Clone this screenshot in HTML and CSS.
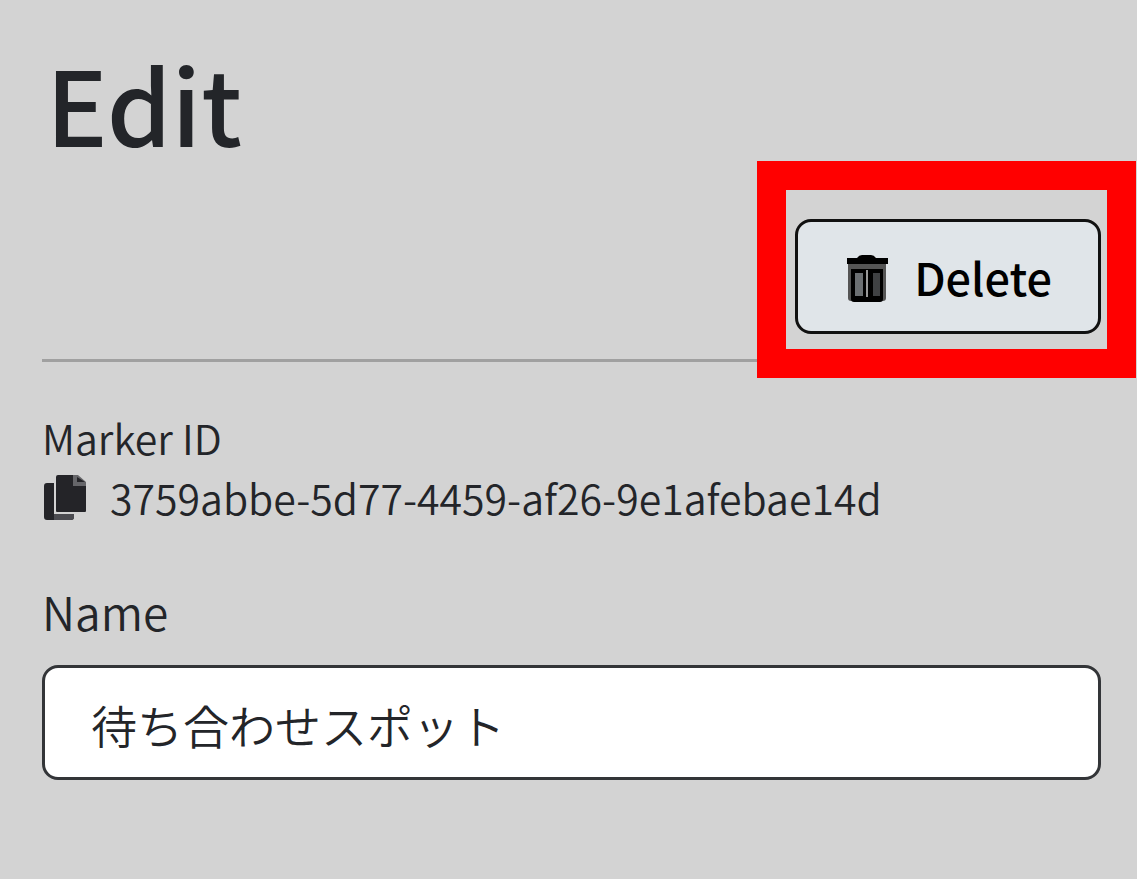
FILE: index.html
```html
<!DOCTYPE html>
<html lang="ja">
<head>
  <meta charset="UTF-8">
  <title>Edit</title>
  <meta name="viewport" content="width=device-width,initial-scale=1">
  <link rel="stylesheet" href="styles.css">
</head>
<body>
  <main class="panel">
    <h1>Edit</h1>
    <div class="toolbar">
      <div class="highlight">
        <button type="button" class="delete-btn">
          <svg class="icon-trash" viewBox="0 0 42 52" aria-hidden="true">
            <path fill="#555" d="M2 13h38v34q0 3-3 3H5q-3 0-3-3z"/>
            <path d="M1 7h10q2-3 5-3h9q3 0 5 3h12v6H1z"/>
            <path d="M5 18h32v30q0 3-3 3H8q-3 0-3-3z"/>
            <path fill="#6b6f72" d="M9 22h8v23H9z"/>
            <path fill="#999" d="M20 19h2v27h-2z"/>
            <path fill="#3f4143" d="M27 22h7v23h-7z"/>
          </svg>
          Delete
        </button>
      </div>
    </div>
    <form class="marker-form">
      <div class="marker-id">
        <div>Marker ID</div>
        <div class="id-row">
          <svg class="icon-copy" viewBox="0 0 42 48" aria-hidden="true">
            <path d="M3 10h7v31h20v3q0 3-3 3H3q-3 0-3-3V13q0-3 3-3z"/>
            <path fill="#4b4b50" d="M10 41h20v3q0 3-3 3H10z"/>
            <path d="M14 2h15v11h13v25q0 1-1 1H13q-1 0-1-1V4q0-2 2-2z"/>
            <path fill="#66666a" d="M29 2h5l8 7v4H29z"/>
            <path d="M33 4l8 5h-8z"/>
          </svg>
          <span>3759abbe-5d77-4459-af26-9e1afebae14d</span>
        </div>
      </div>
      <label for="name">Name</label>
      <input type="text" id="name" value="待ち合わせスポット">
    </form>
  </main>
</body>
</html>
```
FILE: styles.css
```css
*{box-sizing:border-box}
body{margin:0;background:#d3d3d3;color:#232529;
  font-family:"Noto Sans CJK JP",sans-serif}
.panel{padding:43px 36px 40px 42px}
h1{margin:0 0 0 4px;font-size:103px;line-height:120px;font-weight:500}

/* панель действий */
.toolbar{display:flex;justify-content:flex-end;height:199px;border-bottom:3px solid #a0a0a0}
.highlight{position:relative;display:flex;margin-top:56px;height:115px}
.highlight::before{content:"";position:absolute;inset:-58px -35px -44px -38px;
  border:29px solid #f00;pointer-events:none}
.delete-btn{display:flex;align-items:center;gap:26px;height:115px;padding:0 46px 0 48px;
  background:#e0e5e9;color:#000;border:3px solid #111;border-radius:16px;
  font:500 45px/60px "Noto Sans CJK JP",sans-serif;cursor:pointer}
.icon-trash{width:42px;height:52px}

.marker-form{display:flex;flex-direction:column}
.marker-id{margin-top:45px;font-size:41px;line-height:60px;font-weight:350}
.id-row{display:flex;align-items:center;gap:24px}
.icon-copy{width:42px;height:48px;margin-left:2px;fill:#242428}
label{margin-top:52px;font-size:46px;line-height:64px;font-weight:350}
input{width:100%;height:115px;margin-top:22px;padding:2px 46px 0;background:#fff;color:#232529;
  border:3px solid #333538;border-radius:16px;font:350 46px/60px "Noto Sans CJK JP",sans-serif}
```
